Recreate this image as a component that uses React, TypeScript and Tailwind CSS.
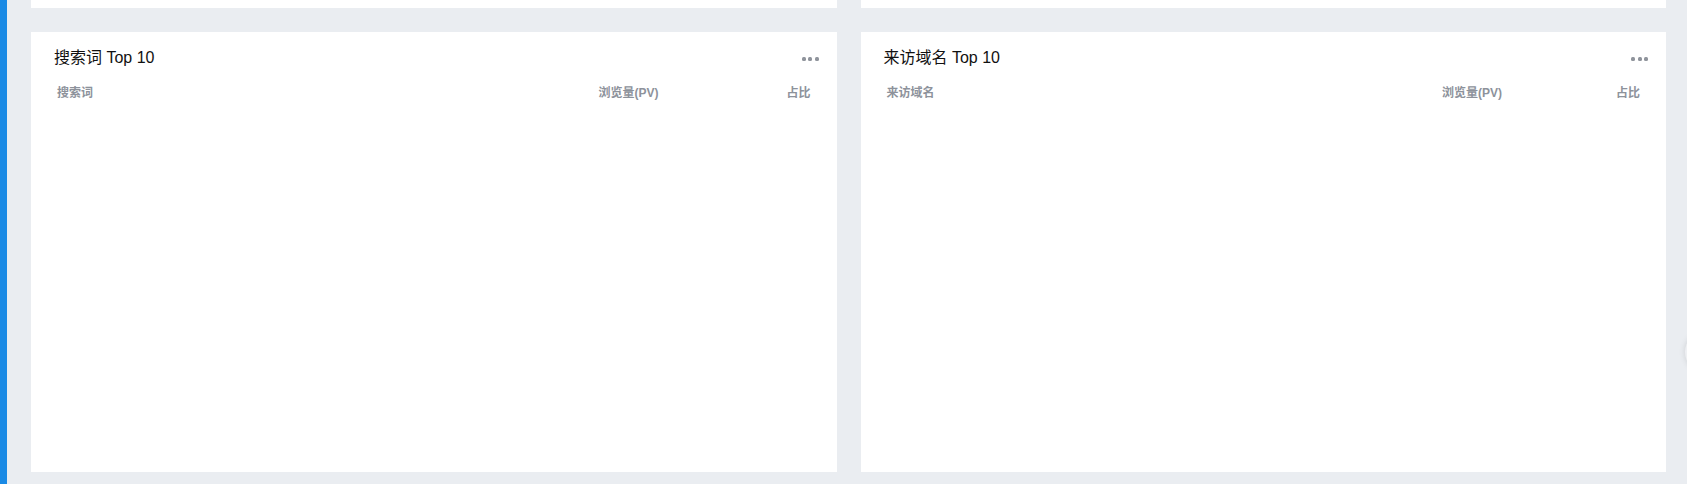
import React from "react";

type Card = {
  title: string;
  firstCol: string;
  lastColWidth: string;
};

const cards: Card[] = [
  { title: "搜索词 Top 10", firstCol: "搜索词", lastColWidth: "w-[152px]" },
  { title: "来访域名 Top 10", firstCol: "来访域名", lastColWidth: "w-[138px]" },
];

function MoreDots() {
  return (
    <div className="flex items-center gap-[2.5px] pt-[1px]">
      <span className="w-[4px] h-[4px] rounded-[1.5px] bg-[#8f949c]" />
      <span className="w-[4px] h-[4px] rounded-[1.5px] bg-[#8f949c]" />
      <span className="w-[4px] h-[4px] rounded-[1.5px] bg-[#8f949c]" />
    </div>
  );
}

function TopCard({ card }: { card: Card }) {
  return (
    <div className="bg-white h-[440px] flex flex-col">
      {/* header */}
      <div className="flex items-center justify-between pl-[23px] pr-[18px] pt-[14px] h-[38px]">
        <h3 className="text-[16px] leading-[24px] text-[#111] font-normal">{card.title}</h3>
        <MoreDots />
      </div>

      {/* table head */}
      <div className="flex items-center px-[26px] mt-[15px] text-[12px] leading-[16px] font-bold text-[#8d929b]">
        <div className="flex-1">{card.firstCol}</div>
        <div>浏览量(PV)</div>
        <div className={`${card.lastColWidth} text-right`}>占比</div>
      </div>
    </div>
  );
}

export default function App() {
  return (
    <div
      className="relative flex h-[484px] w-full overflow-hidden bg-[#eaedf1]"
      style={{ fontFamily: '"Liberation Sans", "Noto Sans CJK SC", sans-serif' }}
    >
      <div className="w-[7px] shrink-0 bg-[#1a8ae5]" />

      <div className="flex-1 pl-[24px] pr-[21px] flex flex-col">
        {/* previous row (cut off) */}
        <div className="grid grid-cols-2 gap-[24px] h-[8px] shrink-0">
          <div className="bg-white" />
          <div className="bg-white" />
        </div>

        <div className="grid grid-cols-2 gap-[24px] mt-[24px]">
          {cards.map((c) => (
            <TopCard key={c.title} card={c} />
          ))}
        </div>
      </div>

      {/* floating button peeking from the right edge */}
      <div className="absolute right-[-38px] top-[332px] w-[40px] h-[40px] rounded-full bg-[#eef0f3] shadow-[0_0_6px_rgba(0,0,0,0.12)]" />
    </div>
  );
}
